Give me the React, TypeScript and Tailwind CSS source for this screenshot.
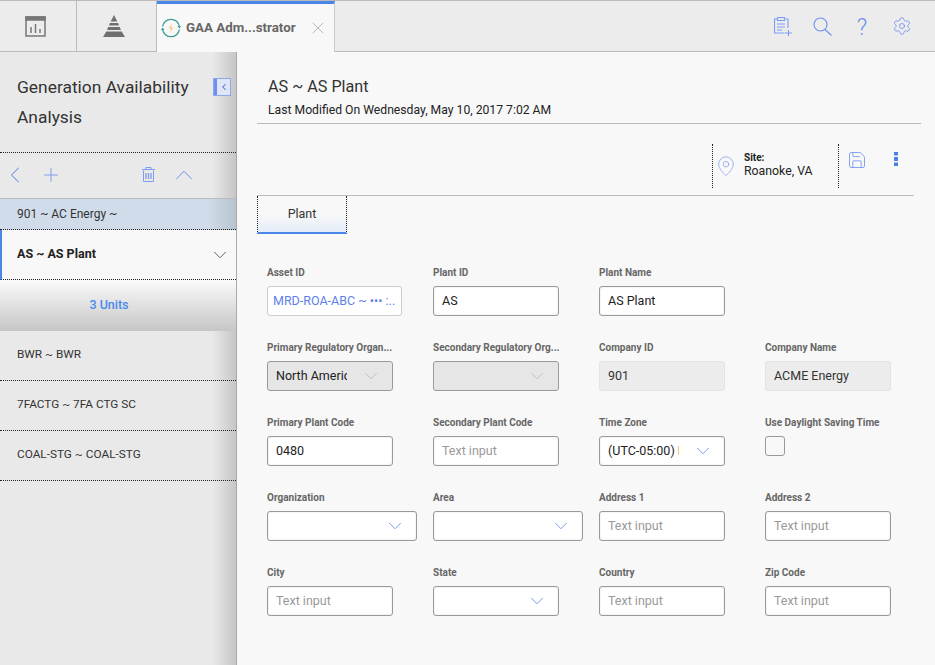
import { ChevronDown, ChevronLeft, ChevronUp, MapPin, Plus, Save, Settings, X } from "lucide-react";

const font = { fontFamily: 'Roboto, "Noto Sans", sans-serif' };

function Dashboard() {
  return (
    <svg width="21" height="21" viewBox="0 0 21 21" fill="none" stroke="#777" strokeWidth="1.500">
      <rect x="1" y="1" width="19" height="19" />
      <rect x="1" y="1" width="19" height="3" fill="#777" />
      <path d="M6 17v-6M10.500 17V8M15 17v-4" />
    </svg>
  );
}

function Pyramid() {
  return (
    <svg width="24" height="22" viewBox="0 0 24 22" fill="#6f6f6f">
      <path d="M12 0l3.300 6.500H8.700z" />
      <path d="M7.900 8h8.200l1 2.500H6.900z" />
      <path d="M6.200 12h11.600l1.100 3H5.100z" />
      <path d="M4.300 16.500h15.400L23 22H1z" />
    </svg>
  );
}

function GaaIcon() {
  return (
    <svg width="20" height="20" viewBox="0 0 20 20" fill="none">
      <path d="M1.600 8.500A8.500 8.500 0 0 1 18.400 8.500M18.400 11.500A8.500 8.500 0 0 1 1.600 11.500" stroke="#3b9a94" strokeWidth="1.300" />
      <path d="M16.500 8l2 2.500 1.500-2.500zM3.500 12L1.500 9.500 0 12z" fill="#3b9a94" />
      <path d="M11 5.500L7.500 10.500h2.300l-.8 4 3.500-5h-2.300z" fill="#f5cf87" />
    </svg>
  );
}

function ClipboardPlus() {
  return (
    <svg width="18" height="19" viewBox="0 0 18 19" fill="none" stroke="#7f9cf5" strokeWidth="1.100">
      <path d="M10.500 16H.5V2h3M11.500 2H14v9" />
      <rect x="3.500" y=".5" width="7" height="3" />
      <path d="M3 7h8M3 10h8M3 13h5M11 16h7M14.500 13v6" />
    </svg>
  );
}

function SearchGlass() {
  return (
    <svg width="19" height="19" viewBox="0 0 19 19" fill="none" stroke="#6f8ff0" strokeWidth="1.100">
      <circle cx="7.500" cy="7.500" r="6.500" />
      <path d="M12 12.500L18.500 18.500" />
    </svg>
  );
}

function TrashCan() {
  return (
    <svg width="13" height="15" viewBox="0 0 13 15" fill="none" stroke="#7f9cf5" strokeWidth="1">
      <path d="M1.500 3.500v11h10v-11M0 2.500h13M4 2.500V.5h5v2" />
      <path d="M4 6v6M6.500 6v6M9 6v6" strokeWidth="1.300" />
    </svg>
  );
}

function Dots() {
  return (
    <svg width="4" height="14" viewBox="0 0 4 14" fill="#4a7ee8">
      <rect width="4" height="3.500" />
      <rect y="5" width="4" height="4" />
      <rect y="10.500" width="4" height="3.500" />
    </svg>
  );
}

function Field({ label, children }: { label: string; children: React.ReactNode }) {
  return (
    <div className="h-[75px]">
      <div className="mb-[7px] h-[12px] text-[10px] leading-[12px] font-bold whitespace-nowrap text-[#666]">{label}</div>
      {children}
    </div>
  );
}

const inputBox = "flex h-[30px] w-[126px] items-center rounded-[3px] border border-[#999] bg-white pl-[8px] text-[12.500px] shadow-[inset_0_0_2px_#ddd]";

function TextInput({ value }: { value?: string }) {
  return (
    <div className={inputBox}>
      <span className={value ? "text-[#222]" : "text-[#999]"}>{value ?? "Text input"}</span>
    </div>
  );
}

function ReadOnly({ value }: { value: string }) {
  return (
    <div className="flex h-[30px] w-[126px] items-center rounded-[3px] border border-[#e4e4e4] bg-[#ececec] pl-[8px] text-[12.500px] text-[#333]">
      {value}
    </div>
  );
}

function Select({ value, wide, disabled }: { value?: string; wide?: boolean; disabled?: boolean }) {
  return (
    <div
      className={`flex h-[30px] items-center justify-between rounded-[3px] border border-[#999] pr-[10px] pl-[8px] text-[12.500px] text-[#222] ${
        wide ? "w-[150px]" : "w-[126px]"
      } ${disabled ? "bg-[#e6e6e6]" : "bg-white shadow-[inset_0_0_2px_#ddd]"}`}
    >
      <span className="w-[71px] overflow-hidden whitespace-nowrap">{value}</span>
      <ChevronDown size={22} strokeWidth={1} className={disabled ? "text-[#bbb]" : "text-[#6f8ff0]"} />
    </div>
  );
}

const units = ["BWR ~ BWR", "7FACTG ~ 7FA CTG SC", "COAL-STG ~ COAL-STG"];

export default function App() {
  return (
    <div className="flex h-[665px] w-[935px] flex-col overflow-hidden bg-[#f8f8f8] text-[#222]" style={font}>
      <header className="flex h-[52px] shrink-0 border-y border-[#bbb] bg-[#ececec]">
        <div className="flex w-[77px] items-center justify-center border-r border-[#bbb] pr-[5px]">
          <Dashboard />
        </div>
        <div className="flex w-[80px] items-center justify-center border-r border-[#bbb] pr-[5px]">
          <Pyramid />
        </div>
        <div className="z-10 -mb-px flex w-[178px] items-center border-t-[3px] border-r border-t-[#4a86e8] border-r-[#ccc] bg-[#f8f8f8] pl-[4px]">
          <GaaIcon />
          <span className="ml-[5px] w-[110px] text-[13.300px] font-bold whitespace-nowrap text-[#666]">GAA Adm...strator</span>
          <X size={20} strokeWidth={1} className="ml-[12px] text-[#aaa]" />
        </div>
        <div className="ml-[439px] flex items-center text-[#6f8ff0]">
          <ClipboardPlus />
          <span className="ml-[21px]">
            <SearchGlass />
          </span>
          <span className="mt-[2px] ml-[23px] w-[14px] text-center text-[23px] leading-none font-light">?</span>
          <Settings size={20} strokeWidth={1} className="ml-[23px]" />
        </div>
      </header>

      <div className="flex min-h-0 flex-1">
        <aside className="w-[237px] shrink-0 border-r border-[#aaa] bg-gradient-to-r from-[#e9e9e9] from-[90%] to-[#c6c6c6]">
          <div className="flex h-[101px] justify-between border-b border-dotted border-[#222] pt-[20px] pl-[17px]">
            <h1 className="text-[17.400px] leading-[30px] text-[#333]">
              Generation Availability
              <br />
              Analysis
            </h1>
            <div className="mt-[7px] mr-[6px] flex h-[16px] w-[16px] items-center justify-center border-l-[3px] border-[#6f8ff0] bg-[#dfe6f7] outline outline-[#8ea6ee]">
              <ChevronLeft size={10} strokeWidth={2.500} className="text-[#4a6fe0]" />
            </div>
          </div>
          <div className="flex h-[46px] items-center border-b border-[#bbb] pb-[2px] pl-[1px] text-[#6f8ff0]">
            <ChevronLeft size={28} strokeWidth={0.900} />
            <Plus size={22} strokeWidth={0.900} className="ml-[11px]" />
            <span className="ml-[80px]">
              <TrashCan />
            </span>
            <ChevronUp size={30} strokeWidth={0.800} className="ml-[14px]" />
          </div>
          <div className="flex h-[31px] items-center border-b border-dotted border-[#222] bg-gradient-to-r from-[#d1dcea] from-[88%] to-[#b8c3d0] pl-[17px] text-[12px] text-[#333]">
            901 ~ AC Energy ~
          </div>
          <div className="flex h-[50px] items-center justify-between border-b border-l-2 border-b-[#222] border-l-[#4a86e8] bg-[#f8f8f8] [border-bottom-style:dotted] pr-[5px] pl-[15px] text-[12.500px] font-bold">
            AS ~ AS Plant
            <ChevronDown size={22} strokeWidth={1} className="text-[#555]" />
          </div>
          <div className="flex h-[51px] items-center justify-center bg-gradient-to-b from-[#fbfbfb] to-[#c6c6c6] pr-[18px] pb-[1px] text-[12.500px] font-medium text-[#4a8af0]">
            3 Units
          </div>
          {units.map((u) => (
            <div key={u} className="flex h-[50px] items-center border-b border-dotted border-[#222] pb-[2px] pl-[17px] text-[11.800px] text-[#333]">
              {u}
            </div>
          ))}
        </aside>

        <main className="min-w-0 flex-1 pl-[20px]">
          <div className="mr-[14px] h-[72px] border-b border-[#bbb] pt-[23px] pl-[11px]">
            <h2 className="text-[16.200px] leading-[24px] text-[#333]">AS ~ AS Plant</h2>
            <p className="mt-[3px] text-[12.200px] leading-[16px]">Last Modified On Wednesday, May 10, 2017 7:02 AM</p>
          </div>
          <div className="mr-[21px] flex h-[72px] items-start justify-end border-b border-[#bbb] pt-[20px]">
            <div className="flex h-[44px] w-[127px] items-center border-x border-dotted border-[#222] pl-[2px]">
              <MapPin size={22} strokeWidth={0.900} className="text-[#8ea6ee]" />
              <div className="mt-[-2px] ml-[7px] text-[12.300px] leading-[15px]">
                <div className="text-[10px] leading-[12px] font-bold">Site:</div>
                Roanoke, VA
              </div>
            </div>
            <Save size={20} strokeWidth={1} className="mt-[6px] ml-[8px] text-[#6f8ff0]" />
            <span className="mt-[8px] mr-[16px] ml-[27px]">
              <Dots />
            </span>
          </div>
          <div className="flex h-[38px] w-[90px] items-center justify-center border-x border-b-2 border-dotted border-x-[#222] border-b-[#4a86e8] [border-bottom-style:solid] bg-gradient-to-b from-[#f8f8f8] from-50% to-[#e3edf9] text-[12.500px] text-[#333]">
            Plant
          </div>
          <div className="mt-[33px] grid grid-cols-[repeat(4,126px)] gap-x-[40px] pl-[10px]">
            <Field label="Asset ID">
              <div className="flex h-[30px] w-[135px] items-center overflow-hidden rounded-[3px] border border-[#ccc] bg-white pl-[5px] text-[12.500px] whitespace-nowrap text-[#5f7fe8]">
                MRD-ROA-ABC ~ ••• :..
              </div>
            </Field>
            <Field label="Plant ID">
              <TextInput value="AS" />
            </Field>
            <Field label="Plant Name">
              <TextInput value="AS Plant" />
            </Field>
            <div />
            <Field label="Primary Regulatory Organ...">
              <Select value="North America" disabled />
            </Field>
            <Field label="Secondary Regulatory Org...">
              <Select disabled />
            </Field>
            <Field label="Company ID">
              <ReadOnly value="901" />
            </Field>
            <Field label="Company Name">
              <ReadOnly value="ACME Energy" />
            </Field>
            <Field label="Primary Plant Code">
              <TextInput value="0480" />
            </Field>
            <Field label="Secondary Plant Code">
              <TextInput />
            </Field>
            <Field label="Time Zone">
              <Select value="(UTC-05:00) Eastern" />
            </Field>
            <Field label="Use Daylight Saving Time">
              <div className="h-[20px] w-[20px] rounded-[3px] border border-[#999] bg-[#f8f8f8]" />
            </Field>
            <Field label="Organization">
              <Select wide />
            </Field>
            <Field label="Area">
              <Select wide />
            </Field>
            <Field label="Address 1">
              <TextInput />
            </Field>
            <Field label="Address 2">
              <TextInput />
            </Field>
            <Field label="City">
              <TextInput />
            </Field>
            <Field label="State">
              <Select />
            </Field>
            <Field label="Country">
              <TextInput />
            </Field>
            <Field label="Zip Code">
              <TextInput />
            </Field>
          </div>
        </main>
      </div>
    </div>
  );
}
